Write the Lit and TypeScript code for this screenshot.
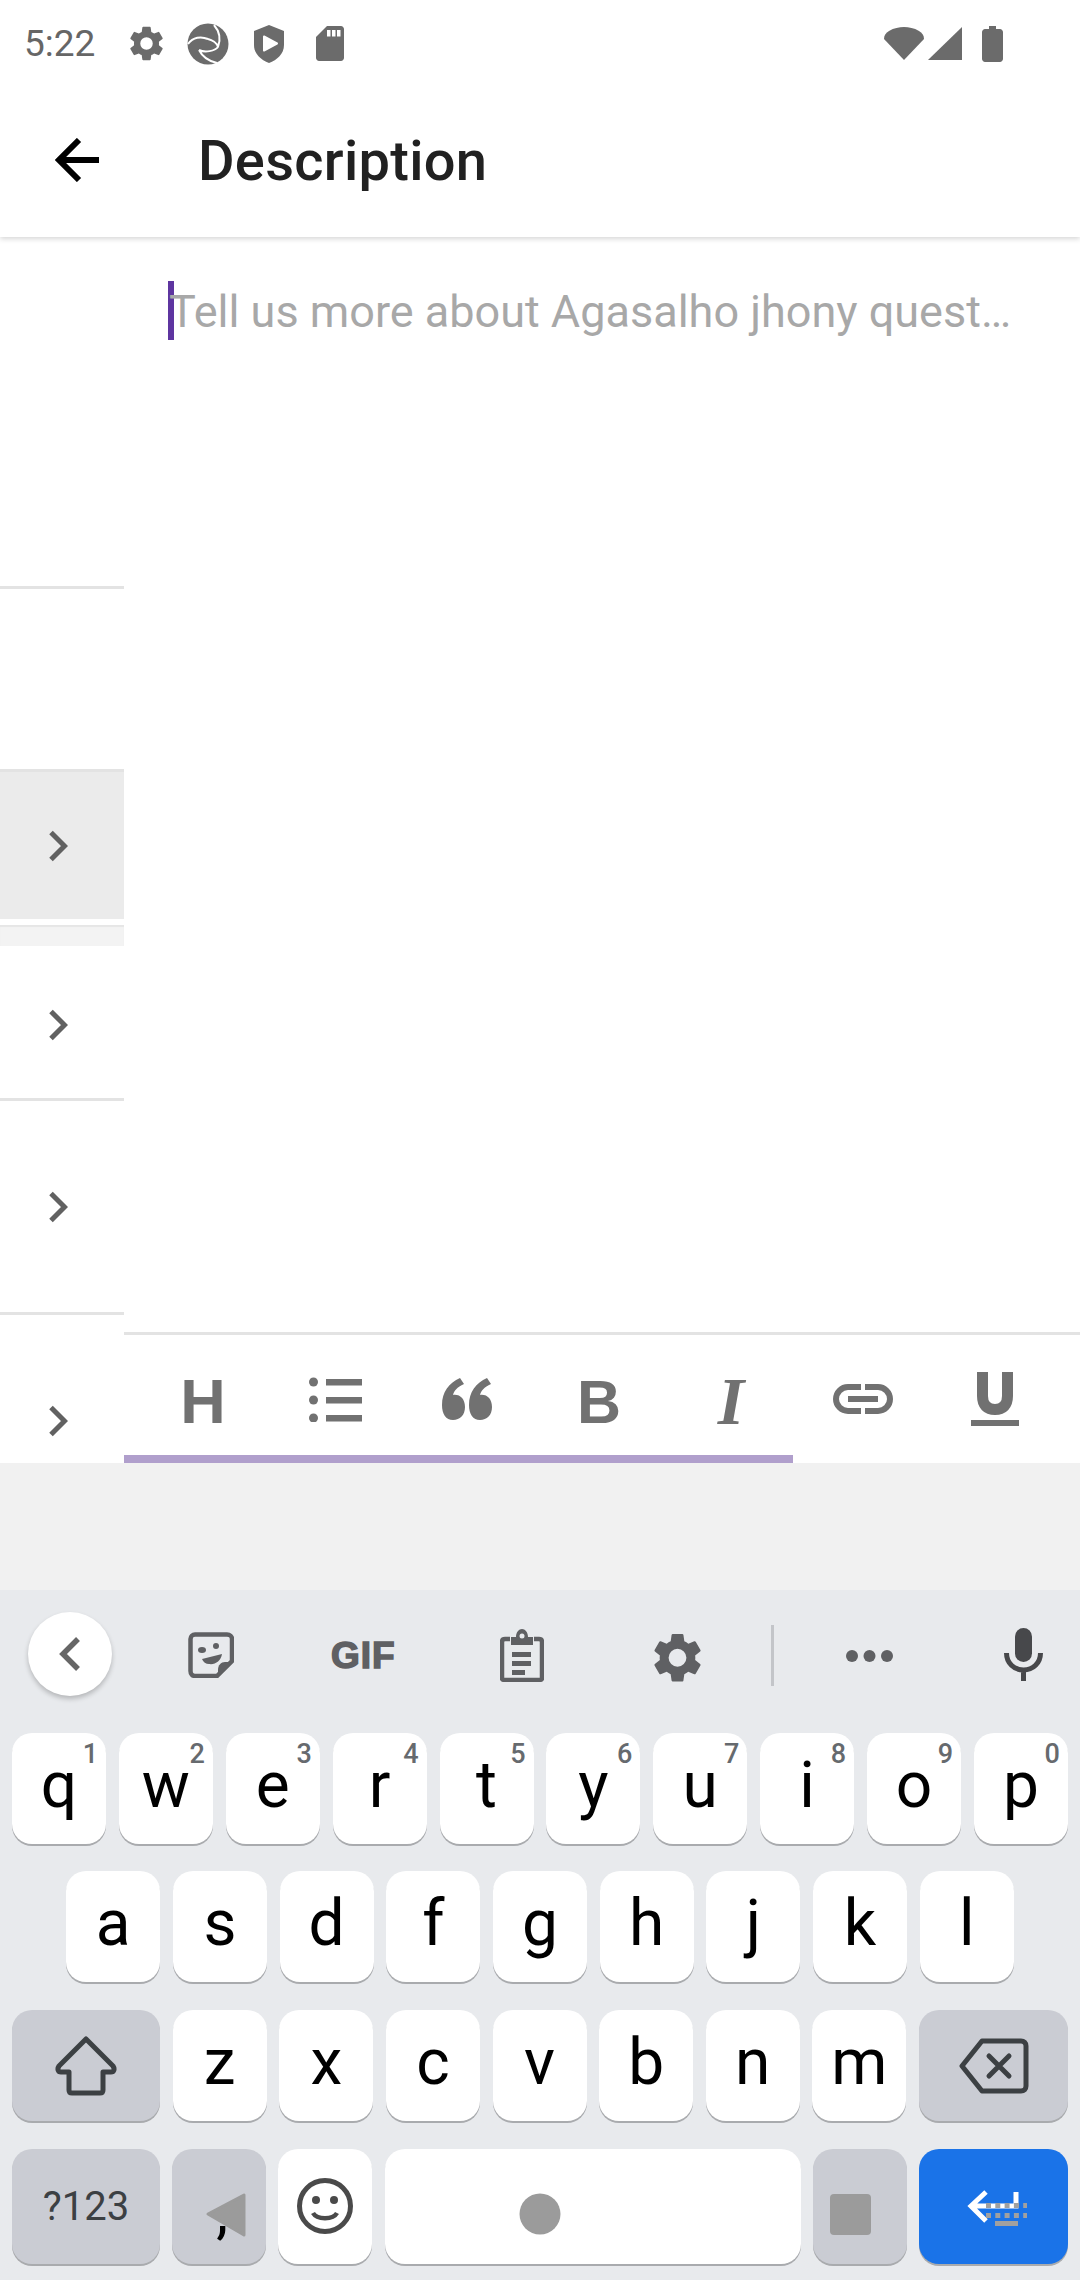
import { LitElement, html, css, svg } from "lit";
import { customElement } from "lit/decorators.js";

const chevron = html`<svg class="chev" viewBox="0 0 20 32"><path d="M3 2.500L16.500 16 3 29.500" fill="none" stroke="#616161" stroke-width="5"/></svg>`;
const gearPath = "M19.14 12.94c.04-.3.06-.61.06-.94 0-.32-.02-.64-.07-.94l2.03-1.58a.49.49 0 0 0 .12-.61l-1.92-3.32a.49.49 0 0 0-.59-.22l-2.39.96a7 7 0 0 0-1.62-.94l-.36-2.54a.48.48 0 0 0-.48-.41h-3.84c-.24 0-.43.17-.47.41l-.36 2.54c-.59.24-1.13.57-1.62.94l-2.39-.96a.49.49 0 0 0-.59.22L2.74 8.87c-.12.21-.08.47.12.61l2.03 1.58c-.05.3-.09.63-.09.94s.02.64.07.94l-2.03 1.58a.49.49 0 0 0-.12.61l1.92 3.32c.12.22.37.29.59.22l2.39-.96c.5.38 1.03.7 1.62.94l.36 2.54c.05.24.24.41.48.41h3.84c.24 0 .44-.17.47-.41l.36-2.54c.59-.24 1.13-.56 1.62-.94l2.39.96c.22.08.47 0 .59-.22l1.92-3.32a.49.49 0 0 0-.12-.61l-2.01-1.58zM12 15.6A3.6 3.6 0 1 1 12 8.4a3.6 3.6 0 0 1 0 7.2z";

const row1 = [["q","1"],["w","2"],["e","3"],["r","4"],["t","5"],["y","6"],["u","7"],["i","8"],["o","9"],["p","0"]];
const row2 = ["a","s","d","f","g","h","j","k","l"];
const row3 = ["z","x","c","v","b","n","m"];

@customElement("app-root")
export class AppRoot extends LitElement {
  static styles = css`
    :host { display: block; width: 1080px; height: 2280px; position: relative; overflow: hidden; background: #fff; font-family: Roboto, sans-serif; }
    .page { display: flex; flex-direction: column; height: 2280px; }
    .status { height: 77px; flex: none; display: flex; align-items: center; padding: 10px 77px 0 24px; box-sizing: border-box; color: #666; position: relative; z-index: 2; background: #fff; }
    .time { font-size: 37px; width: 106px; flex: none; }
    .status svg { display: block; fill: #6b6b6b; flex: none; }
    .s-left { display: flex; align-items: center; gap: 24px; }
    .s-right { margin-left: auto; display: flex; align-items: center; gap: 3px; }
    .appbar { height: 160px; flex: none; display: flex; align-items: center; box-shadow: 0 2px 5px rgba(0,0,0,.16); position: relative; z-index: 1; background: #fff; box-sizing: border-box; padding-top: 1px; }
    .appbar .back { margin: 5px 0 0 55px; width: 44px; height: 44px; display: block; flex: none; }
    .appbar .title { margin-left: 99px; font-size: 56px; font-weight: 500; color: #212121; letter-spacing: 0.3px; padding-top: 7px; }
    .main { height: 1226px; flex: none; display: flex; }
    .left { width: 124px; flex: none; display: flex; flex-direction: column; }
    .blank1 { height: 349px; border-bottom: 3px solid #e3e3e3; flex: none; }
    .blank2 { height: 180px; flex: none; }
    .lrow { display: flex; align-items: center; box-sizing: border-box; flex: none; padding-left: 48px; }
    .grey { height: 150px; background: #ebebeb; border-top: 3px solid #e3e3e3; }
    .sep { height: 27px; flex: none; border-top: 6px solid #fff; background: #f3f3f3; box-shadow: inset 0 2px 1px #e6e6e6; box-sizing: border-box; }
    .r2 { height: 155px; border-bottom: 3px solid #e3e3e3; padding-top: 6px; }
    .r3 { height: 214px; border-bottom: 3px solid #e3e3e3; }
    .r4 { height: 146px; padding-top: 66px; }
    .chev { width: 20px; height: 32px; display: block; }
    .right { flex: 1; display: flex; flex-direction: column; min-width: 0; }
    .editor { flex: 1; padding: 44px 0 0 44px; }
    .input { display: flex; align-items: center; height: 59px; border-left: 6px solid #5e35a0; }
    .ph { font-size: 45px; color: #a8a8a8; white-space: nowrap; margin-left: -5px; padding-top: 2px; }
    .toolbar { height: 131px; flex: none; border-top: 3px solid #e3e3e3; box-sizing: border-box; position: relative; display: flex; padding: 0 0 0 13px; color: #717171; }
    .tool { width: 132px; flex: none; display: flex; align-items: center; justify-content: center; height: 128px; line-height: 1; }
    .tool svg { display: block; fill: #717171; }
    .t-h { font: 700 63px "Liberation Sans", sans-serif; padding-top: 4px; }
    .t-b { font: 700 61px "Liberation Sans", sans-serif; padding-top: 5px; }
    .t-i { font: italic 700 68px "Liberation Serif", serif; padding-top: 4px; }
    .progress { position: absolute; left: 0; bottom: 0; width: 669px; height: 8px; background: #b09fcc; }
    .strip { height: 127px; flex: none; background: #f1f1f1; }
    .kb { flex: 1; background: #e8eaed; display: flex; flex-direction: column; padding: 0 12px; box-sizing: border-box; }
    .kb-top { height: 143px; flex: none; margin: 0 -12px; position: relative; }
    .kb-top > * { position: absolute; display: block; }
    .circle { left: 28px; top: 22px; width: 84px; height: 84px; border-radius: 50%; background: #fff; box-shadow: 0 3px 5px rgba(0,0,0,.22); display: flex !important; align-items: center; justify-content: center; }
    .gif { left: 331px; top: 45px; font: 700 37px "Liberation Sans", sans-serif; color: #5f6063; letter-spacing: 1px; -webkit-text-stroke: 1.500px #5f6063; }
    .divider { left: 771px; top: 35px; width: 3px; height: 61px; background: #c3c5c9; }
    .keys { display: flex; justify-content: space-between; flex: none; }
    .k { background: #fff; border-radius: 20px; box-shadow: 0 2px 0 #a9abae; display: flex; align-items: center; justify-content: center; position: relative; font-size: 64px; color: #000; width: 94px; height: 111px; flex: none; box-sizing: border-box; }
    .l { padding-bottom: 6px; }
    .r-2 { margin-top: 27px; justify-content: center; gap: 12.7px; }
    .r-3 { margin-top: 28px; }
    .r-4 { margin-top: 28px; }
    .r-4 .k { height: 115px; }
    .fn { background: #caccd3; width: 149px; }
    .first { width: 148px; }
    .k sup { position: absolute; top: 8px; right: 8px; font-size: 27px; font-weight: 500; color: #666a6e; line-height: 1; }
    .q123 { font-size: 40px; color: #3c4043; padding-bottom: 1px; }
    .space { width: 416px; }
    .small { width: 94px; }
    .enter { background: #1a73e8; }
    .comma { align-items: flex-end; line-height: 1; font-size: 60px; padding-bottom: 22px; padding-left: 6px; }
    .emoji { padding-bottom: 1px; }
    .nav { position: absolute; left: 0; top: 0; pointer-events: none; }
  `;

  render() {
    return html`
      <div class="page">
        <div class="status">
          <span class="time">5:22</span>
          <div class="s-left">
            <svg width="33" height="35" viewBox="2.500 2 19 20"><path d="${gearPath}"/></svg>
            <svg width="42" height="42" viewBox="0 0 42 42"><circle cx="21" cy="21" r="20.500"/><path d="M1 21C6 14 14 13 21 16M27 2C33 9 34 16 31 24M12 27C15 33 21 38 30 40M21 16C25 17 30 20 31 24M31 24C28 28 18 30 12 27" fill="none" stroke="#fff" stroke-width="2"/></svg>
            <svg width="32" height="38" viewBox="0 0 32 38"><path d="M16 0L31 6V20C31 29 24 35 16 38 8 35 1 29 1 20V6z"/><path d="M11 11.500L24 18.500 11 25.500z" fill="#fff" stroke="#fff" stroke-width="2" stroke-linejoin="round"/></svg>
            <svg width="28" height="35" viewBox="0 0 28 35" style="margin-left:7px"><path d="M11 0H25C26.500 0 28 1.500 28 3V32C28 33.500 26.500 35 25 35H3C1.500 35 0 33.500 0 32V11z"/><path d="M11 4h3.500v6.500H11zM16 4h3.500v6.500H16zM21 4h3.500v6.500H21z" fill="#fff"/></svg>
          </div>
          <div class="s-right">
            <svg width="42" height="33" viewBox="0 0 42 33"><path d="M21 33L1 12C1 8 3 6 6 4 11 1 16 0 21 0s10 1 15 4c3 2 5 4 5 8z"/></svg>
            <svg width="34" height="33" viewBox="0 0 34 33"><path d="M34 0V33H0z"/></svg>
            <svg width="21" height="36" viewBox="0 0 21 36" style="margin-left:17px"><path d="M7 0h7v3h4c1.500 0 3 1.500 3 3v27c0 1.500-1.500 3-3 3H3c-1.500 0-3-1.500-3-3V6c0-1.500 1.500-3 3-3h4z"/></svg>
          </div>
        </div>
        <div class="appbar">
          <svg class="back" viewBox="0 0 44 44"><path d="M24 2L4 22 24 42M4 22H44" fill="none" stroke="#000" stroke-width="6"/></svg>
          <span class="title">Description</span>
        </div>
        <div class="main">
          <div class="left">
            <div class="blank1"></div>
            <div class="blank2"></div>
            <div class="lrow grey">${chevron}</div>
            <div class="sep"></div>
            <div class="lrow r2">${chevron}</div>
            <div class="lrow r3">${chevron}</div>
            <div class="lrow r4">${chevron}</div>
          </div>
          <div class="right">
            <div class="editor">
              <div class="input"><span class="ph">Tell us more about Agasalho jhony quest…</span></div>
            </div>
            <div class="toolbar">
              <div class="tool"><span class="t-h">H</span></div>
              <div class="tool"><svg width="53" height="45" viewBox="0 0 53 45"><circle cx="4.500" cy="5" r="4.500"/><circle cx="4.500" cy="23" r="4.500"/><circle cx="4.500" cy="41" r="4.500"/><path d="M17 2h36v6.500H17zM17 20h36v6.500H17zM17 38h36v6.500H17z"/></svg></div>
              <div class="tool"><svg width="50" height="42" viewBox="0 0 50 42"><path d="M18 0L22 6C15 9 12 13 11 17 18 16 23 21 23 29 23 37 18 42 11 42 4 42 0 36 0 27 0 14 7 5 18 0zM45 0L49 6C42 9 39 13 38 17 45 16 50 21 50 29 50 37 45 42 38 42 31 42 27 36 27 27 27 14 34 5 45 0z"/></svg></div>
              <div class="tool"><span class="t-b">B</span></div>
              <div class="tool"><span class="t-i">I</span></div>
              <div class="tool"><svg width="60" height="30" viewBox="0 0 60 30"><path d="M28 3H15a12 12 0 0 0 0 24H28M32 3H45a12 12 0 0 1 0 24H32" fill="none" stroke="#717171" stroke-width="6"/><path d="M15 12h30v6H15z"/></svg></div>
              <div class="tool"><svg width="48" height="54" viewBox="0 0 48 54"><path d="M11.500 0V24C11.500 33 16 37.500 24 37.500S36.500 33 36.500 24V0" fill="none" stroke="#717171" stroke-width="11"/><path d="M0 48H48V54H0z"/></svg></div>
              <div class="progress"></div>
            </div>
          </div>
        </div>
        <div class="strip"></div>
        <div class="kb">
          <div class="kb-top">
            <div class="circle"><svg width="24" height="36" viewBox="0 0 24 36"><path d="M20 3L5 18 20 33" fill="none" stroke="#666" stroke-width="5.500"/></svg></div>
            <svg style="left:188px;top:42px" width="46" height="46" viewBox="0 0 46 46"><path d="M7 2.500H39C42 2.500 44 4.500 44 7V29L29 44H7C4.500 44 2.500 42 2.500 39V7C2.500 4.500 4.500 2.500 7 2.500z" fill="none" stroke="#5f6063" stroke-width="4.500"/><path d="M30 45V38C30 33 33 30 37 30H45z" fill="#5f6063"/><ellipse cx="14" cy="18" rx="4" ry="3" fill="#5f6063"/><ellipse cx="28" cy="14" rx="3" ry="3" fill="#5f6063"/><path d="M14 27L34 22C33 29 27 33 21 32 18 32 15 30 14 27z" fill="#5f6063"/></svg>
            <span class="gif">GIF</span>
            <svg style="left:500px;top:39px" width="44" height="53" viewBox="0 0 44 53"><path d="M10 10H5C3 10 2 11 2 13V49C2 50.500 3 51 5 51H39C41 51 42 50.500 42 49V13C42 11 41 10 39 10H34" fill="none" stroke="#5f6063" stroke-width="4.500"/><path d="M11 8H16C16 3 19 0 22 0S28 3 28 8H33V16H11z" fill="#5f6063"/><circle cx="22" cy="7" r="2.500" fill="#e8eaed"/><path d="M12 23H31V28H12zM12 32H31V37H12zM12 41H25V46H12z" fill="#5f6063"/></svg>
            <svg style="left:654px;top:43px" width="47" height="49.500" viewBox="2.500 2 19 20"><path fill="#5f6063" d="${gearPath}"/></svg>
            <div class="divider"></div>
            <svg style="left:846px;top:60px" width="47" height="12" viewBox="0 0 47 12"><circle cx="6" cy="6" r="6" fill="#5f6063"/><circle cx="23.500" cy="6" r="6" fill="#5f6063"/><circle cx="41" cy="6" r="6" fill="#5f6063"/></svg>
            <svg style="left:1004px;top:38px" width="39" height="53" viewBox="0 0 39 53"><rect x="11" width="17" height="34" rx="8.500" fill="#47484b"/><path d="M2.500 25C2.500 35 10 42 19.500 42S36.500 35 36.500 25M19.500 42V53" fill="none" stroke="#47484b" stroke-width="5"/></svg>
          </div>
          <div class="keys r-1">
            ${row1.map(([l, n]) => html`<div class="k l">${l}<sup>${n}</sup></div>`)}
          </div>
          <div class="keys r-2">
            ${row2.map((l) => html`<div class="k l">${l}</div>`)}
          </div>
          <div class="keys r-3">
            <div class="k fn first"><svg width="62" height="60" viewBox="0 0 62 60"><path d="M31 3L58 30C60 33 59 36 56 36H48V54C48 56 47 57 45 57H17C15 57 14 56 14 54V36H6C3 36 2 33 4 30z" fill="none" stroke="#3c4043" stroke-width="5" stroke-linejoin="round"/></svg></div>
            ${row3.map((l) => html`<div class="k l">${l}</div>`)}
            <div class="k fn"><svg width="70" height="56" viewBox="0 0 70 56"><path d="M23 3H62C65 3 67 5 67 8V48C67 51 65 53 62 53H23L3 28z" fill="none" stroke="#3c4043" stroke-width="5" stroke-linejoin="round"/><path d="M30 18L50 38M50 18L30 38" stroke="#3c4043" stroke-width="5" stroke-linecap="round"/></svg></div>
          </div>
          <div class="keys r-4">
            <div class="k fn first q123">?123</div>
            <div class="k fn small comma">,</div>
            <div class="k emoji"><svg width="56" height="56" viewBox="0 0 56 56"><circle cx="28" cy="28" r="25.500" fill="none" stroke="#4a4a4a" stroke-width="5"/><circle cx="19" cy="22" r="4" fill="#4a4a4a"/><circle cx="37" cy="22" r="4" fill="#4a4a4a"/><path d="M16 35C20 42 36 42 40 35" fill="none" stroke="#4a4a4a" stroke-width="4.500"/></svg></div>
            <div class="k space"></div>
            <div class="k fn small"></div>
            <div class="k fn enter"><svg width="52" height="34" viewBox="0 0 52 34"><path d="M49 2V16H4M19 2L4 16 19 31" fill="none" stroke="#fff" stroke-width="5"/></svg></div>
          </div>
        </div>
      </div>
      <svg class="nav" width="1080" height="2280" viewBox="0 0 1080 2280">
        ${svg`<path d="M244 2195V2235L208 2214z" fill="#9b9b9b" stroke="#9b9b9b" stroke-linejoin="round" stroke-width="3"/>
        <circle cx="540" cy="2214" r="20.500" fill="#9b9b9b"/>
        <rect x="830" y="2194" width="41" height="41" rx="4" fill="#9b9b9b"/>
        <path d="M986 2205.500h41M986 2215.500h41" stroke="#a0a0a0" stroke-width="5" stroke-dasharray="5 4.300" fill="none"/>
        <rect x="995" y="2221" width="23" height="5" fill="#a0a0a0"/>`}
      </svg>
    `;
  }
}
